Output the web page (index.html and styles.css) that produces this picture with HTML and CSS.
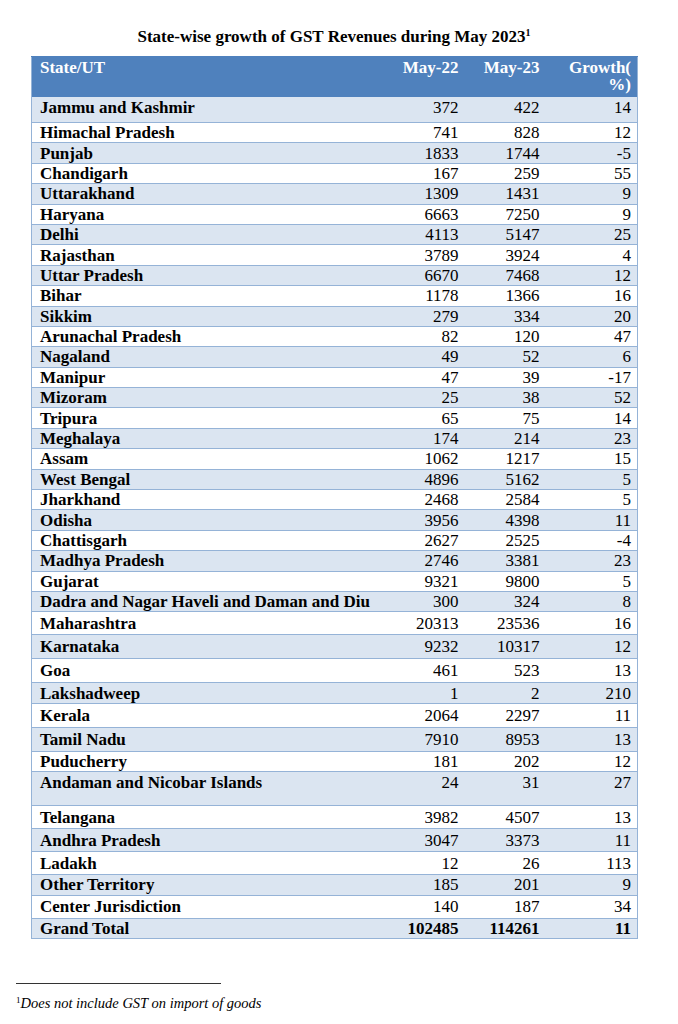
FILE: index.html
```html
<!DOCTYPE html>
<html lang="en">
<head>
<meta charset="utf-8">
<title>State-wise growth of GST Revenues during May 2023</title>
<link rel="stylesheet" href="styles.css">
</head>
<body>
<main class="page">
  <h1 class="title">State-wise growth of GST Revenues during May 2023<sup class="title-ref">1</sup></h1>
  <table class="gst">
    <colgroup>
      <col class="col-state">
      <col class="col-num">
      <col class="col-num2">
      <col class="col-growth">
    </colgroup>
    <thead>
      <tr>
        <th class="left">State/UT</th>
        <th>May-22</th>
        <th>May-23</th>
        <th>Growth(<br>%)</th>
      </tr>
    </thead>
    <tbody>
      <tr class="row-first"><td>Jammu and Kashmir</td><td>372</td><td>422</td><td>14</td></tr>
      <tr><td>Himachal Pradesh</td><td>741</td><td>828</td><td>12</td></tr>
      <tr><td>Punjab</td><td>1833</td><td>1744</td><td>-5</td></tr>
      <tr><td>Chandigarh</td><td>167</td><td>259</td><td>55</td></tr>
      <tr><td>Uttarakhand</td><td>1309</td><td>1431</td><td>9</td></tr>
      <tr><td>Haryana</td><td>6663</td><td>7250</td><td>9</td></tr>
      <tr><td>Delhi</td><td>4113</td><td>5147</td><td>25</td></tr>
      <tr><td>Rajasthan</td><td>3789</td><td>3924</td><td>4</td></tr>
      <tr><td>Uttar Pradesh</td><td>6670</td><td>7468</td><td>12</td></tr>
      <tr><td>Bihar</td><td>1178</td><td>1366</td><td>16</td></tr>
      <tr><td>Sikkim</td><td>279</td><td>334</td><td>20</td></tr>
      <tr><td>Arunachal Pradesh</td><td>82</td><td>120</td><td>47</td></tr>
      <tr><td>Nagaland</td><td>49</td><td>52</td><td>6</td></tr>
      <tr><td>Manipur</td><td>47</td><td>39</td><td>-17</td></tr>
      <tr><td>Mizoram</td><td>25</td><td>38</td><td>52</td></tr>
      <tr><td>Tripura</td><td>65</td><td>75</td><td>14</td></tr>
      <tr><td>Meghalaya</td><td>174</td><td>214</td><td>23</td></tr>
      <tr><td>Assam</td><td>1062</td><td>1217</td><td>15</td></tr>
      <tr><td>West Bengal</td><td>4896</td><td>5162</td><td>5</td></tr>
      <tr><td>Jharkhand</td><td>2468</td><td>2584</td><td>5</td></tr>
      <tr><td>Odisha</td><td>3956</td><td>4398</td><td>11</td></tr>
      <tr><td>Chattisgarh</td><td>2627</td><td>2525</td><td>-4</td></tr>
      <tr><td>Madhya Pradesh</td><td>2746</td><td>3381</td><td>23</td></tr>
      <tr><td>Gujarat</td><td>9321</td><td>9800</td><td>5</td></tr>
      <tr><td>Dadra and Nagar Haveli and Daman and Diu</td><td>300</td><td>324</td><td>8</td></tr>
      <tr class="row-md"><td>Maharashtra</td><td>20313</td><td>23536</td><td>16</td></tr>
      <tr class="row-lg"><td>Karnataka</td><td>9232</td><td>10317</td><td>12</td></tr>
      <tr class="row-lg"><td>Goa</td><td>461</td><td>523</td><td>13</td></tr>
      <tr><td>Lakshadweep</td><td>1</td><td>2</td><td>210</td></tr>
      <tr class="row-lg"><td>Kerala</td><td>2064</td><td>2297</td><td>11</td></tr>
      <tr class="row-lg"><td>Tamil Nadu</td><td>7910</td><td>8953</td><td>13</td></tr>
      <tr><td>Puducherry</td><td>181</td><td>202</td><td>12</td></tr>
      <tr class="row-tall"><td>Andaman and Nicobar Islands</td><td>24</td><td>31</td><td>27</td></tr>
      <tr class="row-md"><td>Telangana</td><td>3982</td><td>4507</td><td>13</td></tr>
      <tr class="row-md"><td>Andhra Pradesh</td><td>3047</td><td>3373</td><td>11</td></tr>
      <tr class="row-md"><td>Ladakh</td><td>12</td><td>26</td><td>113</td></tr>
      <tr><td>Other Territory</td><td>185</td><td>201</td><td>9</td></tr>
      <tr class="row-md"><td>Center Jurisdiction</td><td>140</td><td>187</td><td>34</td></tr>
      <tr class="row-total"><td>Grand Total</td><td>102485</td><td>114261</td><td>11</td></tr>
    </tbody>
  </table>
</main>
<footer class="notes">
  <hr class="note-rule">
  <p class="note"><sup class="note-ref">1</sup>Does not include GST on import of goods</p>
</footer>
</body>
</html>
```
FILE: styles.css
```css
html, body {
  margin: 0;
  padding: 0;
  background: #ffffff;
}

body {
  font-family: "Liberation Serif", "Times New Roman", serif;
  color: #000000;
}

.page {
  width: 606px;
  margin-left: 31px;
  padding-top: 27px;
}

.title {
  margin: 0 0 9px;
  font-size: 17px;
  line-height: 20px;
  font-weight: bold;
  text-align: center;
}

.title-ref {
  font-size: 10px;
  line-height: 0;
  vertical-align: 6px;
}

.gst {
  width: 606px;
  border-collapse: collapse;
  table-layout: fixed;
  border: 1px solid #95b3d7;
  font-size: 17px;
  line-height: 17px;
}

.col-state { width: 354px; }
.col-num { width: 79px; }
.col-num2 { width: 81px; }
.col-growth { width: 92px; }

.gst thead tr {
  height: 40px;
}

.gst th {
  padding: 2px 6px 0 8px;
  background: #4f81bd;
  color: #ffffff;
  font-weight: bold;
  text-align: right;
  vertical-align: top;
  border: 0;
  border-top: 1px solid #4f81bd;
}

.gst th.left {
  text-align: left;
}

.gst td {
  padding: 0 6px 0 8px;
  text-align: right;
  vertical-align: middle;
  border-bottom: 1px solid #95b3d7;
  white-space: nowrap;
}

.gst td:first-child {
  text-align: left;
  font-weight: bold;
}

.gst tbody tr {
  height: 20.4px;
}

.gst tbody tr:nth-child(odd) {
  background: #dbe5f1;
}

.gst tbody tr.row-first { height: 26px; }
.gst tbody tr.row-md { height: 23px; }
.gst tbody tr.row-lg { height: 24px; }
.gst tbody tr.row-tall { height: 34px; }

.gst tbody tr.row-first td {
  vertical-align: top;
  padding-top: 2px;
}

.gst tbody tr.row-tall td {
  vertical-align: top;
  padding-top: 2px;
}

.gst tbody tr.row-total td {
  font-weight: bold;
}

.notes {
  margin-top: 44px;
  padding-left: 16px;
}

.note-rule {
  width: 205px;
  height: 0;
  margin: 0;
  border: 0;
  border-top: 1.5px solid #333333;
}

.note {
  margin: 10px 0 0;
  font-size: 14.5px;
  line-height: 18px;
  font-style: italic;
}

.note-ref {
  font-size: 9px;
  line-height: 0;
  vertical-align: 5px;
  font-style: normal;
}
```
